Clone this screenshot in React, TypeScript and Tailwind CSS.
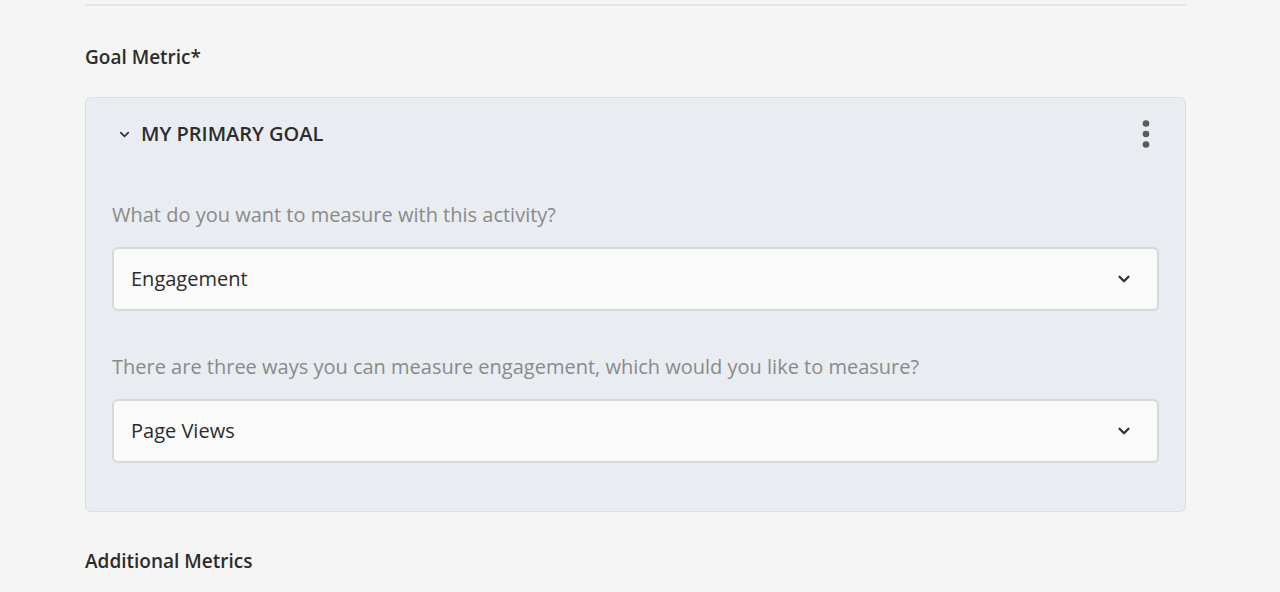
import { ChevronDown } from "lucide-react";

const FONT = { fontFamily: "'Open Sans', 'Noto Sans', sans-serif" };

function Select({ value }: { value: string }) {
  return (
    <div className="mt-[20px] flex h-[64px] items-center justify-between rounded-[6px] border-2 border-[#d8d8d8] bg-[#fafafa] pl-[17px] pr-[24px]">
      <span className="text-[20px] leading-[24px] text-[#2c2c2c]">{value}</span>
      <ChevronDown className="h-[18px] w-[18px] text-[#333]" strokeWidth={3} />
    </div>
  );
}

export default function App() {
  return (
    <div className="min-h-[592px] w-full bg-[#f5f5f5]" style={FONT}>
      <div className="mx-[85px] w-[1101px]">
        <div className="h-[6px] border-b-2 border-[#e6e6e6]" />
        <div className="pt-[39px] text-[19px] font-semibold leading-[24px] text-[#2c2c2c]">Goal Metric*</div>

        <div className="mt-[28px] rounded-[6px] border border-[#d9dfe8] bg-[#e9ecf1] px-[26px] pb-[48px]">
          <div className="flex h-[72px] items-center justify-between">
            <div className="flex items-center gap-[9px] pl-[5px]">
              <ChevronDown className="h-[15px] w-[15px] text-[#333]" strokeWidth={2.6} />
              <span className="text-[20px] font-semibold leading-[24px] text-[#2c2c2c]">MY PRIMARY GOAL</span>
            </div>
            <svg width="8" height="28" viewBox="0 0 8 28" className="mr-[9px]">
              <circle cx="4" cy="3.5" r="3.3" fill="#5a5a5a" />
              <circle cx="4" cy="14" r="3.3" fill="#5a5a5a" />
              <circle cx="4" cy="24.5" r="3.3" fill="#5a5a5a" />
            </svg>
          </div>

          <div className="pt-[33px] text-[20px] leading-[24px] text-[#8a8a8a]">What do you want to measure with this activity?</div>
          <Select value="Engagement" />

          <div className="pt-[44px] text-[20px] leading-[24px] text-[#8a8a8a]">
            There are three ways you can measure engagement, which would you like to measure?
          </div>
          <Select value="Page Views" />
        </div>

        <div className="pt-[37px] text-[19px] font-semibold leading-[24px] text-[#2c2c2c]">Additional Metrics</div>
      </div>
    </div>
  );
}
